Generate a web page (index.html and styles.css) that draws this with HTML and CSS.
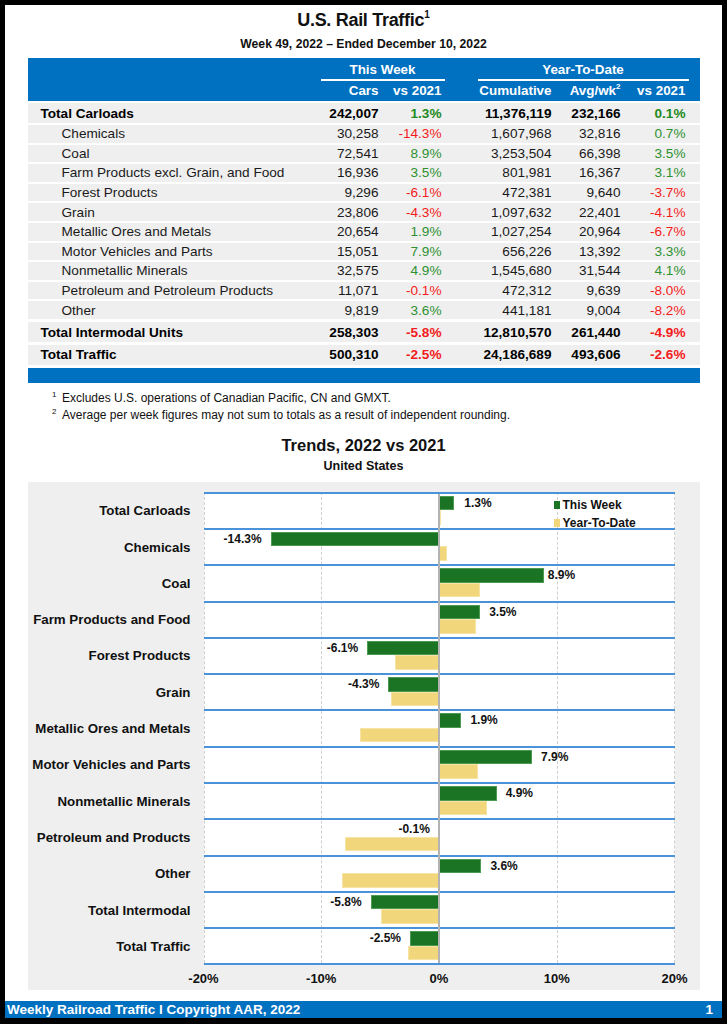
FILE: index.html
```html
<!DOCTYPE html>
<html>
<head>
<meta charset="utf-8">
<link rel="stylesheet" href="styles.css">
</head>
<body>
<div class="page">
  <h1 class="title">U.S. Rail Traffic<sup>1</sup></h1>
  <div class="subtitle">Week 49, 2022 – Ended December 10, 2022</div>

  <div class="table">
    <div class="thead">
      <div class="hrow1">
        <div class="hgap"></div>
        <div class="hgroup hg1">This Week</div>
        <div class="hgroup hg2">Year-To-Date</div>
      </div>
      <div class="hrow2">
        <div></div>
        <div class="num">Cars</div>
        <div class="num">vs 2021</div>
        <div class="num">Cumulative</div>
        <div class="num">Avg/wk<sup>2</sup></div>
        <div class="num">vs 2021</div>
        <div></div>
      </div>
    </div>

    <div class="trow total first"><div class="name">Total Carloads</div><div class="num">242,007</div><div class="num pos">1.3%</div><div class="num">11,376,119</div><div class="num">232,166</div><div class="num pos">0.1%</div><div></div></div>
    <div class="trow sub"><div class="name">Chemicals</div><div class="num">30,258</div><div class="num neg">-14.3%</div><div class="num">1,607,968</div><div class="num">32,816</div><div class="num pos">0.7%</div><div></div></div>
    <div class="trow sub"><div class="name">Coal</div><div class="num">72,541</div><div class="num pos">8.9%</div><div class="num">3,253,504</div><div class="num">66,398</div><div class="num pos">3.5%</div><div></div></div>
    <div class="trow sub"><div class="name">Farm Products excl. Grain, and Food</div><div class="num">16,936</div><div class="num pos">3.5%</div><div class="num">801,981</div><div class="num">16,367</div><div class="num pos">3.1%</div><div></div></div>
    <div class="trow sub"><div class="name">Forest Products</div><div class="num">9,296</div><div class="num neg">-6.1%</div><div class="num">472,381</div><div class="num">9,640</div><div class="num neg">-3.7%</div><div></div></div>
    <div class="trow sub"><div class="name">Grain</div><div class="num">23,806</div><div class="num neg">-4.3%</div><div class="num">1,097,632</div><div class="num">22,401</div><div class="num neg">-4.1%</div><div></div></div>
    <div class="trow sub"><div class="name">Metallic Ores and Metals</div><div class="num">20,654</div><div class="num pos">1.9%</div><div class="num">1,027,254</div><div class="num">20,964</div><div class="num neg">-6.7%</div><div></div></div>
    <div class="trow sub"><div class="name">Motor Vehicles and Parts</div><div class="num">15,051</div><div class="num pos">7.9%</div><div class="num">656,226</div><div class="num">13,392</div><div class="num pos">3.3%</div><div></div></div>
    <div class="trow sub"><div class="name">Nonmetallic Minerals</div><div class="num">32,575</div><div class="num pos">4.9%</div><div class="num">1,545,680</div><div class="num">31,544</div><div class="num pos">4.1%</div><div></div></div>
    <div class="trow sub"><div class="name">Petroleum and Petroleum Products</div><div class="num">11,071</div><div class="num neg">-0.1%</div><div class="num">472,312</div><div class="num">9,639</div><div class="num neg">-8.0%</div><div></div></div>
    <div class="trow sub"><div class="name">Other</div><div class="num">9,819</div><div class="num pos">3.6%</div><div class="num">441,181</div><div class="num">9,004</div><div class="num neg">-8.2%</div><div></div></div>
    <div class="trow total inter"><div class="name">Total Intermodal Units</div><div class="num">258,303</div><div class="num neg">-5.8%</div><div class="num">12,810,570</div><div class="num">261,440</div><div class="num neg">-4.9%</div><div></div></div>
    <div class="trow total traffic"><div class="name">Total Traffic</div><div class="num">500,310</div><div class="num neg">-2.5%</div><div class="num">24,186,689</div><div class="num">493,606</div><div class="num neg">-2.6%</div><div></div></div>
    <div class="tfoot"></div>
  </div>

  <div class="notes">
    <p><sup>1</sup>Excludes U.S. operations of Canadian Pacific, CN and GMXT.</p>
    <p><sup>2</sup>Average per week figures may not sum to totals as a result of independent rounding.</p>
  </div>

  <h2 class="ctitle">Trends, 2022 vs 2021</h2>
  <div class="csub">United States</div>

  <div class="chart">
    <div class="cats">
      <div>Total Carloads</div>
      <div>Chemicals</div>
      <div>Coal</div>
      <div>Farm Products and Food</div>
      <div>Forest Products</div>
      <div>Grain</div>
      <div>Metallic Ores and Metals</div>
      <div>Motor Vehicles and Parts</div>
      <div>Nonmetallic Minerals</div>
      <div>Petroleum and Products</div>
      <div>Other</div>
      <div>Total Intermodal</div>
      <div>Total Traffic</div>
    </div>
    <div class="plot">
      <div class="vline" style="left:0px"></div>
      <div class="vline" style="left:117.75px"></div>
      <div class="vline" style="left:353.25px"></div>
      <div class="vline" style="left:470px"></div>

      <div class="prow">
        <div class="bar tw" style="left:235.5px;width:15.3px"></div>
        <div class="bar ytd" style="left:235.5px;width:1.2px"></div>
        <div class="lbl" style="left:260.8px">1.3%</div>
      </div>
      <div class="prow">
        <div class="bar tw" style="left:67.1px;width:168.4px"></div>
        <div class="bar ytd" style="left:235.5px;width:8.2px"></div>
        <div class="lbl r" style="right:412.9px">-14.3%</div>
      </div>
      <div class="prow">
        <div class="bar tw" style="left:235.5px;width:104.8px"></div>
        <div class="bar ytd" style="left:235.5px;width:41.2px"></div>
        <div class="lbl" style="left:344.3px">8.9%</div>
      </div>
      <div class="prow">
        <div class="bar tw" style="left:235.5px;width:41.2px"></div>
        <div class="bar ytd" style="left:235.5px;width:36.5px"></div>
        <div class="lbl" style="left:285.7px">3.5%</div>
      </div>
      <div class="prow">
        <div class="bar tw" style="left:163.7px;width:71.8px"></div>
        <div class="bar ytd" style="left:191.9px;width:43.6px"></div>
        <div class="lbl r" style="right:316.3px">-6.1%</div>
      </div>
      <div class="prow">
        <div class="bar tw" style="left:184.9px;width:50.6px"></div>
        <div class="bar ytd" style="left:187.2px;width:48.3px"></div>
        <div class="lbl r" style="right:295.1px">-4.3%</div>
      </div>
      <div class="prow">
        <div class="bar tw" style="left:235.5px;width:22.4px"></div>
        <div class="bar ytd" style="left:156.6px;width:78.9px"></div>
        <div class="lbl" style="left:266.9px">1.9%</div>
      </div>
      <div class="prow">
        <div class="bar tw" style="left:235.5px;width:93px"></div>
        <div class="bar ytd" style="left:235.5px;width:38.9px"></div>
        <div class="lbl" style="left:337.5px">7.9%</div>
      </div>
      <div class="prow">
        <div class="bar tw" style="left:235.5px;width:57.7px"></div>
        <div class="bar ytd" style="left:235.5px;width:48.3px"></div>
        <div class="lbl" style="left:302.2px">4.9%</div>
      </div>
      <div class="prow">
        <div class="bar tw" style="left:234.3px;width:1.2px"></div>
        <div class="bar ytd" style="left:141.3px;width:94.2px"></div>
        <div class="lbl r" style="right:244.7px">-0.1%</div>
      </div>
      <div class="prow">
        <div class="bar tw" style="left:235.5px;width:42.4px"></div>
        <div class="bar ytd" style="left:138.9px;width:96.6px"></div>
        <div class="lbl" style="left:286.9px">3.6%</div>
      </div>
      <div class="prow">
        <div class="bar tw" style="left:167.2px;width:68.3px"></div>
        <div class="bar ytd" style="left:177.8px;width:57.7px"></div>
        <div class="lbl r" style="right:312.8px">-5.8%</div>
      </div>
      <div class="prow">
        <div class="bar tw" style="left:206px;width:29.5px"></div>
        <div class="bar ytd" style="left:204.9px;width:30.6px"></div>
        <div class="lbl r" style="right:273.5px">-2.5%</div>
      </div>

      <div class="zero"></div>

      <div class="legend">
        <div class="li"><span class="sw tw"></span>This Week</div>
        <div class="li"><span class="sw ytd"></span>Year-To-Date</div>
      </div>
    </div>
    <div class="axis">
      <span>-20%</span><span>-10%</span><span>0%</span><span>10%</span><span>20%</span>
    </div>
  </div>

  <div class="footer">
    <span>Weekly Railroad Traffic l Copyright AAR, 2022</span>
    <span>1</span>
  </div>
</div>
</body>
</html>
```

FILE: styles.css
```css
html, body {
  margin: 0;
  padding: 0;
}
body {
  background: #000;
  font-family: "Liberation Sans", Arial, sans-serif;
  color: #111;
}
.page {
  box-sizing: border-box;
  width: 717px;
  height: 1013px;
  margin: 5px 5px 6px 5px;
  background: #fff;
  display: flex;
  flex-direction: column;
  align-items: center;
}
.title {
  margin: 4px 0 0;
  font-family: "Liberation Sans", Arial, sans-serif;
  font-size: 18px;
  letter-spacing: -0.3px;
  line-height: 22px;
  font-weight: bold;
}
.title sup {
  font-size: 10px;
  vertical-align: 8px;
  line-height: 0;
  letter-spacing: 0;
}
.subtitle {
  margin-top: 5px;
  font-size: 12.2px;
  line-height: 16px;
  font-weight: bold;
}

/* table */
.table {
  margin-top: 6px;
  width: 672px;
  font-size: 13.6px;
}
.thead {
  background: #0070c0;
  color: #fff;
  font-weight: bold;
  font-size: 13.4px;
  padding: 3px 0 1px;
}
.hrow1 {
  display: grid;
  grid-template-columns: 293px 121px 244px 14px;
  height: 20px;
}
.hgroup {
  text-align: center;
  line-height: 18px;
  border-bottom: 2px solid #fff;
}
.hg1 {
  margin-right: -3px;
}
.hg2 {
  margin-left: 36px;
  margin-right: -3px;
}
.hrow2 {
  display: grid;
  grid-template-columns: 293px 58px 63px 110px 69px 65px 14px;
  line-height: 18px;
  margin-top: 1px;
}
.hrow2 sup {
  font-size: 8px;
  vertical-align: 6px;
  line-height: 0;
}
.num {
  text-align: right;
}
.trow {
  display: grid;
  grid-template-columns: 293px 58px 63px 110px 69px 65px 14px;
  align-items: center;
  background: #efefef;
  height: 17.6px;
  margin-top: 2px;
  color: #1a1a1a;
}
.trow.first {
  height: 20px;
}
.trow.inter {
  height: 20.5px;
  margin-top: 3px;
}
.trow.traffic {
  height: 20px;
  margin-top: 2.5px;
}
.trow.total {
  font-weight: bold;
  color: #000;
}
.trow .name {
  padding-left: 34px;
  white-space: nowrap;
}
.trow.total .name {
  padding-left: 13px;
}
.pos {
  color: #2e9130;
}
.total .pos {
  color: #1f8a22;
}
.neg {
  color: #f31b1b;
}
.tfoot {
  background: #0070c0;
  height: 15.5px;
  margin-top: 2.7px;
}

/* notes */
.notes {
  align-self: stretch;
  margin-top: 7px;
  padding-left: 47px;
  font-size: 12px;
  line-height: 17px;
  color: #111;
}
.notes p {
  margin: 0;
}
.notes sup {
  display: inline-block;
  width: 10px;
  font-size: 8px;
  vertical-align: 5px;
  line-height: 0;
}

.ctitle {
  margin: 10.5px 0 0;
  font-size: 16.5px;
  line-height: 20px;
  font-weight: bold;
}
.csub {
  margin-top: 3px;
  font-size: 12.5px;
  line-height: 16px;
  font-weight: bold;
}

/* chart */
.chart {
  margin-top: 8px;
  width: 672px;
  height: 508px;
  box-sizing: border-box;
  background: #efefef;
  padding-top: 10px;
  display: grid;
  grid-template-columns: 176px 471px 25px;
  grid-template-rows: auto auto;
  align-content: start;
}
.cats {
  grid-column: 1;
  display: flex;
  flex-direction: column;
  font-weight: bold;
  font-size: 13.3px;
  color: #111;
}
.cats div {
  height: 36.3px;
  display: flex;
  align-items: center;
  justify-content: flex-end;
  padding-right: 13px;
  padding-top: 2px;
  box-sizing: border-box;
  white-space: nowrap;
}
.plot {
  grid-column: 2;
  position: relative;
  background: #fff;
  border-bottom: 2px solid #4a93db;
}
.vline {
  position: absolute;
  top: 0;
  bottom: 0;
  width: 0;
  border-left: 1px dashed #cfcfcf;
}
.zero {
  position: absolute;
  top: 2px;
  bottom: 0;
  left: 234.5px;
  width: 2px;
  background: #b3b3b3;
}
.prow {
  position: relative;
  height: 36.3px;
  box-sizing: border-box;
  border-top: 2px solid #4a93db;
}
.bar {
  position: absolute;
  height: 14.5px;
  box-sizing: border-box;
}
.bar.tw {
  top: 2px;
  background: #1b7423;
  border: 1px solid #4f9a52;
}
.bar.ytd {
  top: 16.5px;
  background: #f2d67c;
  border: 1px solid #f7e3a4;
}
.lbl {
  position: absolute;
  top: 2px;
  line-height: 14px;
  font-size: 12px;
  font-weight: bold;
  color: #111;
  white-space: nowrap;
}
.legend {
  position: absolute;
  left: 350px;
  top: 4px;
  font-size: 12px;
  font-weight: bold;
  color: #111;
  line-height: 18px;
}
.li {
  display: flex;
  align-items: center;
}
.sw {
  display: inline-block;
  width: 6px;
  height: 8px;
  margin-right: 3px;
}
.sw.tw {
  background: #1b7423;
}
.sw.ytd {
  background: #f2d67c;
}
.axis {
  grid-column: 2;
  margin: 6px -20px 0;
  display: flex;
  justify-content: space-between;
  font-size: 13px;
  font-weight: bold;
  line-height: 16px;
  color: #111;
}
.axis span {
  width: 40px;
  text-align: center;
}

.footer {
  margin-top: auto;
  align-self: stretch;
  height: 17px;
  background: #0070c0;
  color: #fff;
  font-weight: bold;
  font-size: 13.5px;
  line-height: 17px;
  display: flex;
  justify-content: space-between;
  padding: 0 9px 0 2px;
}
```
